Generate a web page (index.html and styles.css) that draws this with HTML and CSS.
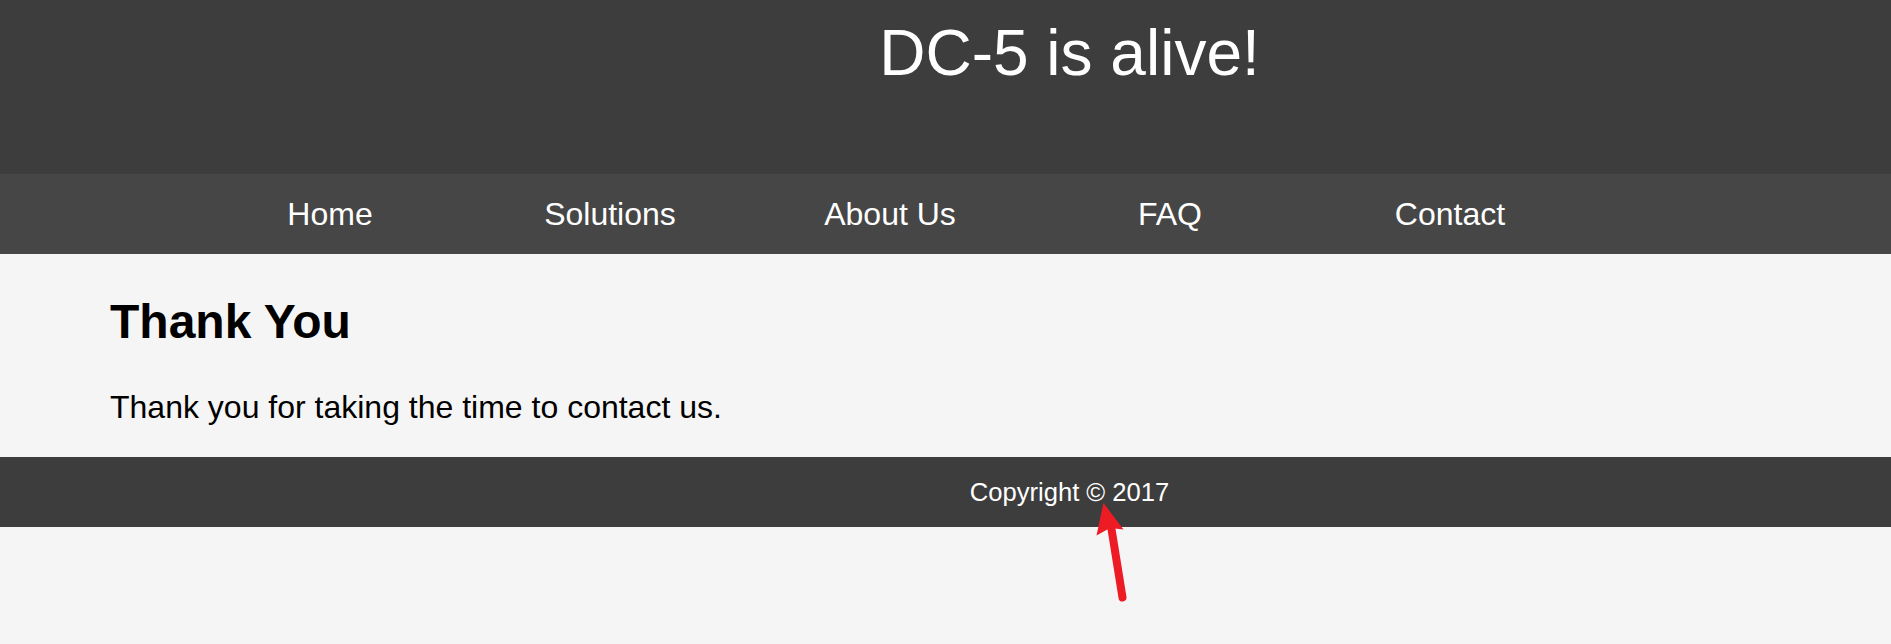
FILE: index.html
```html
<!DOCTYPE html>
<html lang="en">
<head>
<meta charset="utf-8">
<title>DC-5 is alive!</title>
<link rel="stylesheet" href="styles.css">
</head>
<body>
<header class="site-header">
  <h1 class="site-title">DC-5 is alive!</h1>
</header>
<nav class="site-nav">
  <ul class="nav-list">
    <li class="nav-item"><a href="#">Home</a></li>
    <li class="nav-item"><a href="#">Solutions</a></li>
    <li class="nav-item"><a href="#">About Us</a></li>
    <li class="nav-item"><a href="#">FAQ</a></li>
    <li class="nav-item"><a href="#">Contact</a></li>
  </ul>
</nav>
<main class="content">
  <h2 class="content-title">Thank You</h2>
  <p class="content-text">Thank you for taking the time to contact us.</p>
</main>
<footer class="site-footer">
  <p class="copyright">Copyright © 2017</p>
</footer>
<svg class="annotation-arrow" width="60" height="120" viewBox="1080 490 60 120" xmlns="http://www.w3.org/2000/svg">
  <line x1="1111" y1="526" x2="1122.5" y2="597.5" stroke="#ed1c24" stroke-width="8" stroke-linecap="round"/>
  <polygon points="1103.5,503 1096.5,535.5 1110,528 1123.5,529.5" fill="#ed1c24"/>
</svg>
</body>
</html>
```
FILE: styles.css
```css
html, body {
  margin: 0;
  padding: 0;
}
body {
  background: #f5f5f5;
  font-family: "Liberation Sans", Arial, sans-serif;
  color: #000;
  min-height: 644px;
  position: relative;
}
.site-header {
  background: #3d3d3d;
  height: 174px;
  box-sizing: border-box;
  padding: 17px 0 0 248px;
}
.site-title {
  margin: 0;
  font-size: 64px;
  font-weight: normal;
  line-height: 1.149;
  color: #fff;
  text-align: center;
}
.site-nav {
  background: #464646;
  height: 80px;
  display: flex;
  align-items: center;
}
.nav-list {
  list-style: none;
  margin: 0;
  padding: 0 0 0 190px;
  display: flex;
}
.nav-item {
  width: 280px;
  text-align: center;
  font-size: 32px;
  line-height: 1.149;
}
.nav-item a {
  color: #fff;
  text-decoration: none;
}
.content {
  padding: 40px 110px 31px;
}
.content-title {
  margin: 0 0 40px;
  font-size: 48px;
  font-weight: bold;
  line-height: 1.149;
}
.content-text {
  margin: 0;
  font-size: 32px;
  line-height: 1.149;
}
.site-footer {
  background: #3d3d3d;
  height: 70px;
  box-sizing: border-box;
  padding: 2px 0 0 248px;
  display: flex;
  align-items: center;
  justify-content: center;
}
.copyright {
  margin: 0;
  color: #fff;
  font-size: 25.6px;
  line-height: 1.149;
}
.annotation-arrow {
  position: absolute;
  left: 1080px;
  top: 490px;
}
```
